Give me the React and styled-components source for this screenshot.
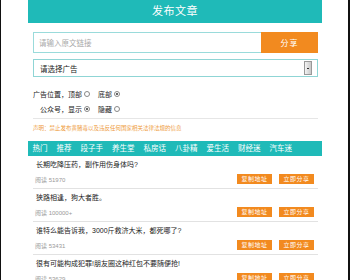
import styled, { createGlobalStyle } from "styled-components";

const GlobalStyle = createGlobalStyle`
  html, body {
    margin: 0;
    padding: 0;
    background: #fff;
  }
  body {
    font-family: "Liberation Sans", "Noto Sans CJK SC", sans-serif;
  }
`;

const teal = "#1fbab8";
const orange = "#f28a1f";

const Page = styled.div`
  min-height: 280px;
  border-left: 1px solid #111;
  border-right: 2px solid #111;
  box-sizing: border-box;
  overflow: hidden;
`;

const Container = styled.div`
  width: 294px;
  margin: 0 auto;
  margin-left: 27px;
`;

const Header = styled.div`
  height: 23px;
  line-height: 23px;
  background: ${teal};
  color: #fff;
  font-size: 11px;
  text-align: center;
  letter-spacing: 0.5px;
`;

const Form = styled.div`
  padding: 9px 4px 0 5px;
`;

const InputRow = styled.div`
  display: flex;
  height: 21px;
`;

const LinkInput = styled.div`
  flex: 1;
  border: 1px solid #9adbdb;
  border-right: none;
  padding-left: 5px;
  font-size: 7.5px;
  color: #aaa;
  display: flex;
  align-items: center;
`;

const ShareButton = styled.div`
  width: 57px;
  background: ${orange};
  color: #fff;
  font-size: 8px;
  display: flex;
  align-items: center;
  justify-content: center;
  letter-spacing: 1px;
`;

const Select = styled.div`
  margin-top: 6px;
  height: 18px;
  border: 1px solid #8fd5d5;
  box-sizing: border-box;
  display: flex;
  align-items: center;
  justify-content: space-between;
  padding: 0 5px 0 6px;
  font-size: 7.5px;
  color: #222;
`;

const Arrow = styled.span`
  width: 6px;
  height: 12px;
  border: 1px solid #999;
  background: linear-gradient(to right, #f4f4f4, #c8c8c8);
  display: flex;
  align-items: center;
  justify-content: center;
  &::after {
    content: "";
    width: 2px;
    height: 1px;
    background: #333;
  }
`;

const OptionLine = styled.div`
  display: flex;
  align-items: center;
  height: 15px;
  font-size: 7px;
  color: #222;
  padding-left: ${(p) => p.$indent || 0}px;
  margin-top: ${(p) => p.$top || 0}px;
`;

const Radio = styled.span`
  display: inline-block;
  width: 4px;
  height: 4px;
  border-radius: 50%;
  border: 1px solid #888;
  margin: 0 8px 0 2px;
  position: relative;
  &::after {
    content: "";
    display: ${(p) => (p.$checked ? "block" : "none")};
    position: absolute;
    left: 1px;
    top: 1px;
    width: 2px;
    height: 2px;
    border-radius: 50%;
    background: #333;
  }
`;

const Rule = styled.div`
  margin-top: 2px;
  border-bottom: 1px solid #e6e6e6;
`;

const Notice = styled.div`
  margin-top: 4px;
  font-size: 5.5px;
  line-height: 10px;
  color: #ee9a3a;
`;

const Tabs = styled.div`
  margin-top: 8px;
  height: 15px;
  background: ${teal};
  display: flex;
`;

const Tab = styled.span`
  padding: 0 4.5px;
  line-height: 15px;
  font-size: 7.5px;
  color: #fff;
  &:first-child {
    padding-left: 4.5px;
  }
`;

const List = styled.div`
  padding: 0 4px 0 5px;
`;

const Item = styled.div`
  padding: 4px 0 4px;
  border-bottom: 1px solid #e2e2e2;
`;

const Title = styled.div`
  padding-left: 3px;
  font-size: 7px;
  line-height: 10px;
  color: #222;
  white-space: nowrap;
`;

const Meta = styled.div`
  margin-top: 4px;
  height: 10px;
  display: flex;
  align-items: center;
  justify-content: space-between;
  padding: 0 4px 0 2px;
`;

const Reads = styled.span`
  font-size: 6px;
  color: #999;
`;

const Actions = styled.div`
  display: flex;
  gap: 7px;
`;

const SmallButton = styled.span`
  height: 10px;
  line-height: 10px;
  padding: 0 4.5px;
  background: ${orange};
  color: #fff;
  font-size: 6px;
  letter-spacing: 0.5px;
`;

const tabs = ["热门", "推荐", "段子手", "养生堂", "私房话", "八卦精", "爱生活", "财经迷", "汽车迷"];

const articles = [
  { title: "长期吃降压药，副作用伤身体吗?", reads: "51970" },
  { title: "狭路相逢，狗大者胜。", reads: "100000+" },
  { title: "谁特么能告诉我，3000斤救济大米，都死哪了?", reads: "53431" },
  { title: "很有可能构成犯罪!朋友圈这种红包不要随便抢!", reads: "53629" },
];

export default function App() {
  return (
    <Page>
      <GlobalStyle />
      <Container>
        <Header>发布文章</Header>
        <Form>
          <InputRow>
            <LinkInput>请输入原文链接</LinkInput>
            <ShareButton>分享</ShareButton>
          </InputRow>
          <Select>
            <span>请选择广告</span>
            <Arrow />
          </Select>
          <OptionLine $top={9}>
            广告位置，顶部<Radio />底部<Radio $checked />
          </OptionLine>
          <OptionLine $indent={7}>
            公众号，显示<Radio $checked />隐藏<Radio />
          </OptionLine>
          <Rule />
          <Notice>声明：禁止发布黄赌毒以及违反任何国家相关法律法规的信息</Notice>
        </Form>
        <Tabs>
          {tabs.map((t) => (
            <Tab key={t}>{t}</Tab>
          ))}
        </Tabs>
        <List>
          {articles.map((a) => (
            <Item key={a.title}>
              <Title>{a.title}</Title>
              <Meta>
                <Reads>阅读 {a.reads}</Reads>
                <Actions>
                  <SmallButton>复制地址</SmallButton>
                  <SmallButton>立即分享</SmallButton>
                </Actions>
              </Meta>
            </Item>
          ))}
        </List>
      </Container>
    </Page>
  );
}
